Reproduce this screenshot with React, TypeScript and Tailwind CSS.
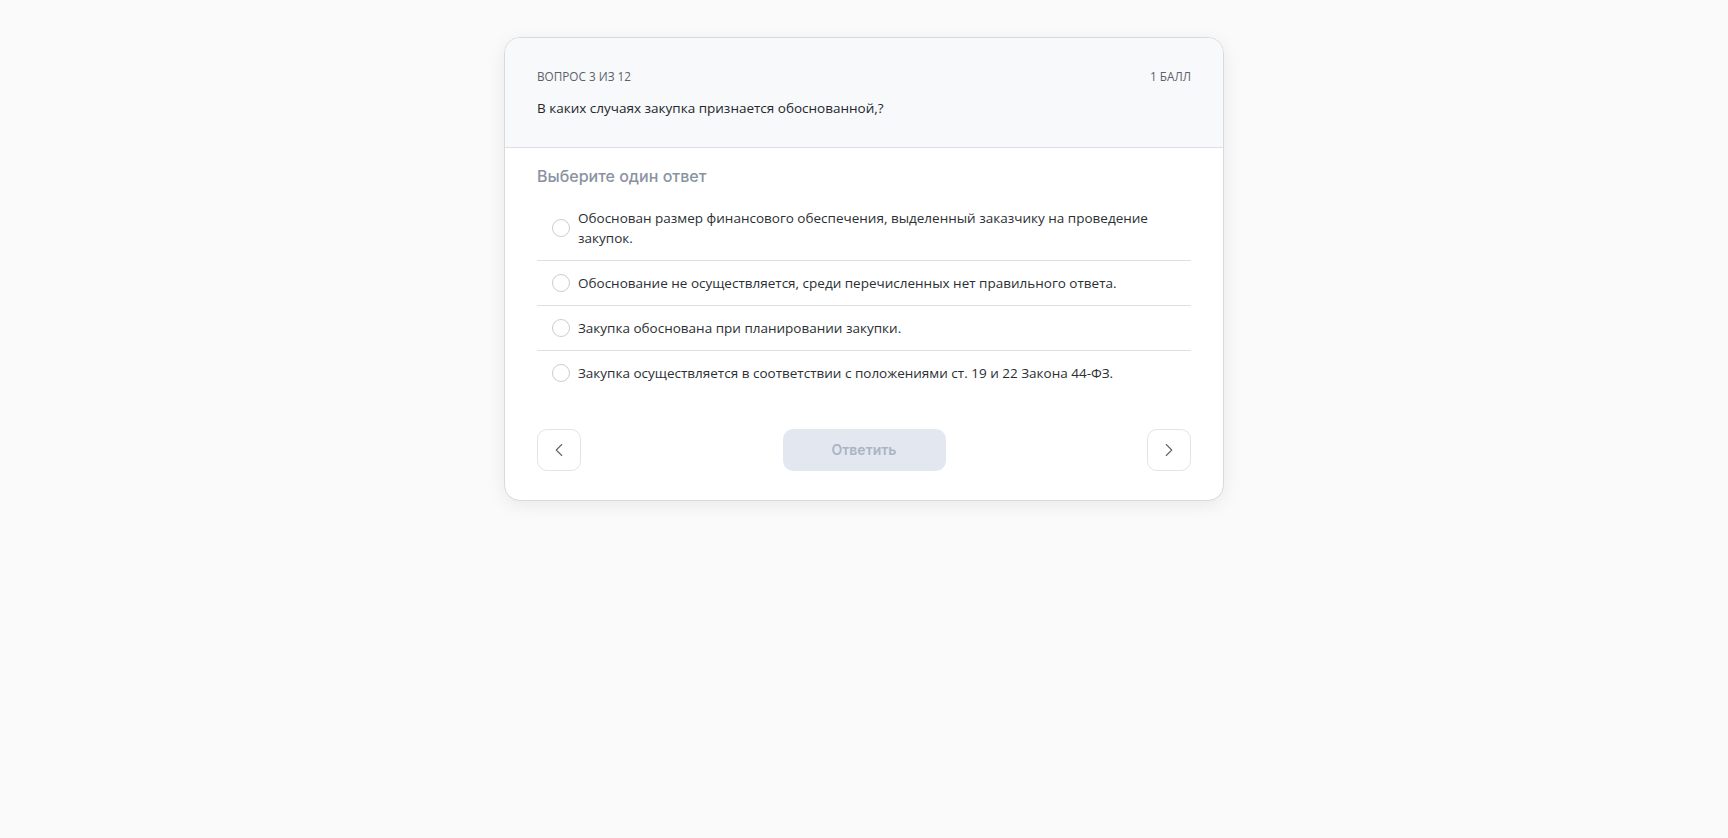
import { ChevronLeft, ChevronRight } from "lucide-react";

const answers = [
  "Обоснован размер финансового обеспечения, выделенный заказчику на проведение закупок.",
  "Обоснование не осуществляется, среди перечисленных нет правильного ответа.",
  "Закупка обоснована при планировании закупки.",
  "Закупка осуществляется в соответствии с положениями ст. 19 и 22 Закона 44-ФЗ.",
];

export default function App() {
  return (
    <div className="min-h-screen bg-[#fafafa] pt-[37px] font-['Open_Sans',sans-serif]">
      <div className="mx-auto w-[720px] overflow-hidden rounded-2xl border border-[#d6d9de] bg-white shadow-[0_4px_18px_rgba(0,0,0,0.07)]">
        {/* Header */}
        <div className="border-b border-[#dcdfe3] bg-[#f8f9fb] px-8 pt-[30px] pb-[29px]">
          <div className="flex items-center justify-between text-[11.75px] leading-4 uppercase text-[#5b6169]">
            <span>Вопрос 3 из 12</span>
            <span>1 балл</span>
          </div>
          <p className="mt-3.5 text-[13.5px] leading-5 text-[#23272b]">
            В каких случаях закупка признается обоснованной,?
          </p>
        </div>

        {/* Body */}
        <div className="px-8 pt-4 pb-[29px]">
          <h2 className="font-['Inter',sans-serif] text-base leading-6 font-medium text-[#8a93a1]">
            Выберите один ответ
          </h2>
          <ul className="mt-2">
            {answers.map((a, i) => (
              <li
                key={i}
                className={`flex items-center gap-2 py-3 pr-4 pl-[15px] ${i < answers.length - 1 ? "border-b border-[#dcdfe3]" : ""}`}
              >
                <span className="h-[18px] w-[18px] shrink-0 rounded-full border border-[#c9cdd3] bg-white" />
                <span className="text-[13.5px] leading-5 text-[#2b2f33]">{a}</span>
              </li>
            ))}
          </ul>

          <div className="mt-[34px] flex items-center justify-between">
            <button className="flex h-[42px] w-[44px] items-center justify-center rounded-[10px] border border-[#e1e4e8] bg-white text-[#5f656d]">
              <ChevronLeft size={22} strokeWidth={1.2} />
            </button>
            <button className="h-[42px] w-[163px] rounded-[10px] bg-[#e3e8f0] font-['Inter',sans-serif] text-sm font-semibold text-[#aab4c4]">
              Ответить
            </button>
            <button className="flex h-[42px] w-[44px] items-center justify-center rounded-[10px] border border-[#e1e4e8] bg-white text-[#5f656d]">
              <ChevronRight size={22} strokeWidth={1.2} />
            </button>
          </div>
        </div>
      </div>
    </div>
  );
}
